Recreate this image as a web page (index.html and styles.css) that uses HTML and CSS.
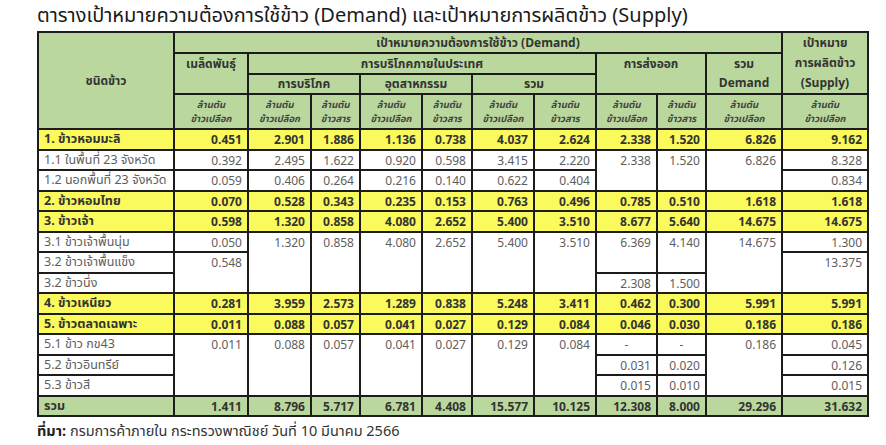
FILE: index.html
```html
<!DOCTYPE html>
<html lang="th">
<head>
<meta charset="utf-8">
<title>Demand Supply</title>
<link rel="stylesheet" href="styles.css">
</head>
<body>
<h1 class="title">ตารางเป้าหมายความต้องการใช้ข้าว (Demand) และเป้าหมายการผลิตข้าว (Supply)</h1>
<table class="grid">
<colgroup>
<col class="c0"><col class="c1"><col class="c2"><col class="c3"><col class="c4"><col class="c5"><col class="c6"><col class="c7"><col class="c8"><col class="c9"><col class="c10"><col class="c11">
</colgroup>
<thead>
<tr class="h1">
<th rowspan="4" class="kind">ชนิดข้าว</th>
<th colspan="10">เป้าหมายความต้องการใช้ข้าว (Demand)</th>
<th rowspan="3" class="supply">เป้าหมาย<br>การผลิตข้าว<br>(Supply)</th>
</tr>
<tr class="h2">
<th rowspan="2" class="top">เมล็ดพันธุ์</th>
<th colspan="6">การบริโภคภายในประเทศ</th>
<th colspan="2" rowspan="2" class="top">การส่งออก</th>
<th rowspan="2" class="two">รวม<br>Demand</th>
</tr>
<tr class="h3">
<th colspan="2">การบริโภค</th>
<th colspan="2">อุตสาหกรรม</th>
<th colspan="2">รวม</th>
</tr>
<tr class="units">
<th>ล้านตัน<br>ข้าวเปลือก</th>
<th>ล้านตัน<br>ข้าวเปลือก</th>
<th>ล้านตัน<br>ข้าวสาร</th>
<th>ล้านตัน<br>ข้าวเปลือก</th>
<th>ล้านตัน<br>ข้าวสาร</th>
<th>ล้านตัน<br>ข้าวเปลือก</th>
<th>ล้านตัน<br>ข้าวสาร</th>
<th>ล้านตัน<br>ข้าวเปลือก</th>
<th>ล้านตัน<br>ข้าวสาร</th>
<th>ล้านตัน<br>ข้าวเปลือก</th>
<th>ล้านตัน<br>ข้าวเปลือก</th>
</tr>
</thead>
<tbody>
<tr class="main">
<td class="lbl">1. ข้าวหอมมะลิ</td><td>0.451</td><td>2.901</td><td>1.886</td><td>1.136</td><td>0.738</td><td>4.037</td><td>2.624</td><td>2.338</td><td>1.520</td><td>6.826</td><td>9.162</td>
</tr>
<tr class="sub">
<td class="lbl">1.1 ในพื้นที่ 23 จังหวัด</td><td>0.392</td><td>2.495</td><td>1.622</td><td>0.920</td><td>0.598</td><td>3.415</td><td>2.220</td><td rowspan="2">2.338</td><td rowspan="2">1.520</td><td rowspan="2">6.826</td><td>8.328</td>
</tr>
<tr class="sub">
<td class="lbl">1.2 นอกพื้นที่ 23 จังหวัด</td><td>0.059</td><td>0.406</td><td>0.264</td><td>0.216</td><td>0.140</td><td>0.622</td><td>0.404</td><td>0.834</td>
</tr>
<tr class="main">
<td class="lbl">2. ข้าวหอมไทย</td><td>0.070</td><td>0.528</td><td>0.343</td><td>0.235</td><td>0.153</td><td>0.763</td><td>0.496</td><td>0.785</td><td>0.510</td><td>1.618</td><td>1.618</td>
</tr>
<tr class="main">
<td class="lbl">3. ข้าวเจ้า</td><td>0.598</td><td>1.320</td><td>0.858</td><td>4.080</td><td>2.652</td><td>5.400</td><td>3.510</td><td>8.677</td><td>5.640</td><td>14.675</td><td>14.675</td>
</tr>
<tr class="sub">
<td class="lbl">3.1 ข้าวเจ้าพื้นนุ่ม</td><td>0.050</td><td rowspan="3">1.320</td><td rowspan="3">0.858</td><td rowspan="3">4.080</td><td rowspan="3">2.652</td><td rowspan="3">5.400</td><td rowspan="3">3.510</td><td rowspan="2">6.369</td><td rowspan="2">4.140</td><td rowspan="3">14.675</td><td>1.300</td>
</tr>
<tr class="sub">
<td class="lbl">3.2 ข้าวเจ้าพื้นแข็ง</td><td rowspan="2">0.548</td><td rowspan="2">13.375</td>
</tr>
<tr class="sub">
<td class="lbl">3.2 ข้าวนึ่ง</td><td>2.308</td><td>1.500</td>
</tr>
<tr class="main">
<td class="lbl">4. ข้าวเหนียว</td><td>0.281</td><td>3.959</td><td>2.573</td><td>1.289</td><td>0.838</td><td>5.248</td><td>3.411</td><td>0.462</td><td>0.300</td><td>5.991</td><td>5.991</td>
</tr>
<tr class="main">
<td class="lbl">5. ข้าวตลาดเฉพาะ</td><td>0.011</td><td>0.088</td><td>0.057</td><td>0.041</td><td>0.027</td><td>0.129</td><td>0.084</td><td>0.046</td><td>0.030</td><td>0.186</td><td>0.186</td>
</tr>
<tr class="sub">
<td class="lbl">5.1 ข้าว กข43</td><td rowspan="3">0.011</td><td rowspan="3">0.088</td><td rowspan="3">0.057</td><td rowspan="3">0.041</td><td rowspan="3">0.027</td><td rowspan="3">0.129</td><td rowspan="3">0.084</td><td class="dash">-</td><td class="dash">-</td><td rowspan="3">0.186</td><td>0.045</td>
</tr>
<tr class="sub">
<td class="lbl">5.2 ข้าวอินทรีย์</td><td>0.031</td><td>0.020</td><td>0.126</td>
</tr>
<tr class="sub">
<td class="lbl">5.3 ข้าวสี</td><td>0.015</td><td>0.010</td><td>0.015</td>
</tr>
<tr class="total">
<td class="lbl">รวม</td><td>1.411</td><td>8.796</td><td>5.717</td><td>6.781</td><td>4.408</td><td>15.577</td><td>10.125</td><td>12.308</td><td>8.000</td><td>29.296</td><td>31.632</td>
</tr>
</tbody>
</table>
<p class="source"><b>ที่มา:</b> กรมการค้าภายใน กระทรวงพาณิชย์ วันที่ 10 มีนาคม 2566</p>
</body>
</html>
```
FILE: styles.css
```css
html, body {
  margin: 0;
  padding: 0;
  background: #ffffff;
}
body {
  padding: 5px 0 0 37px;
  font-family: Tahoma, "Noto Sans Thai", "Leelawadee UI", Loma, Garuda, "DejaVu Sans Condensed", sans-serif;
  color: #333;
}
.title {
  margin: 0 0 3px 0;
  font-size: 20px;
  font-weight: normal;
  line-height: 23px;
  color: #1a1a1a;
}
.grid {
  border-collapse: collapse;
  table-layout: fixed;
  width: 830px;
  font-size: 12px;
}
.c0 { width: 136px; }
.c1 { width: 74px; }
.c2 { width: 63px; }
.c3 { width: 49px; }
.c4 { width: 62px; }
.c5 { width: 50px; }
.c6 { width: 62px; }
.c7 { width: 62px; }
.c8 { width: 61px; }
.c9 { width: 49px; }
.c10 { width: 76px; }
.c11 { width: 86px; }
.grid th, .grid td {
  border: 2px solid #1c1c1c;
  padding: 0 5px;
  overflow: hidden;
  white-space: nowrap;
}
.grid th {
  background: #bad89d;
  font-weight: bold;
  color: #333;
  text-align: center;
  line-height: 18px;
}
.grid th.top { vertical-align: top; padding-top: 1px; }
.grid th.two { line-height: 19px; }
.grid th.supply { line-height: 20px; }
.h1 { height: 21px; }
.h2 { height: 21px; }
.h3 { height: 20px; }
.units { height: 35px; }
.units th {
  font-size: 9.5px;
  line-height: 14px;
  font-style: italic;
  color: #444;
}
.grid td {
  text-align: right;
  height: 20.5px;
  line-height: 16px;
  vertical-align: top;
  padding-top: 2px;
  padding-bottom: 0;
  box-sizing: border-box;
}
.grid td.lbl { text-align: left; font-size: 12.5px; padding-left: 5px; }
.grid td.dash { text-align: center; }
.main td {
  background: #fafa5c;
  font-weight: bold;
  color: #333;
}
.sub td {
  background: #ffffff;
  color: #5e5e5e;
}
.total td {
  background: #bad89d;
  font-weight: bold;
  color: #333;
}
.source {
  margin: 6px 0 0 0;
  font-size: 14.5px;
  line-height: 18px;
  color: #333;
}
.source b { color: #222; }
```
